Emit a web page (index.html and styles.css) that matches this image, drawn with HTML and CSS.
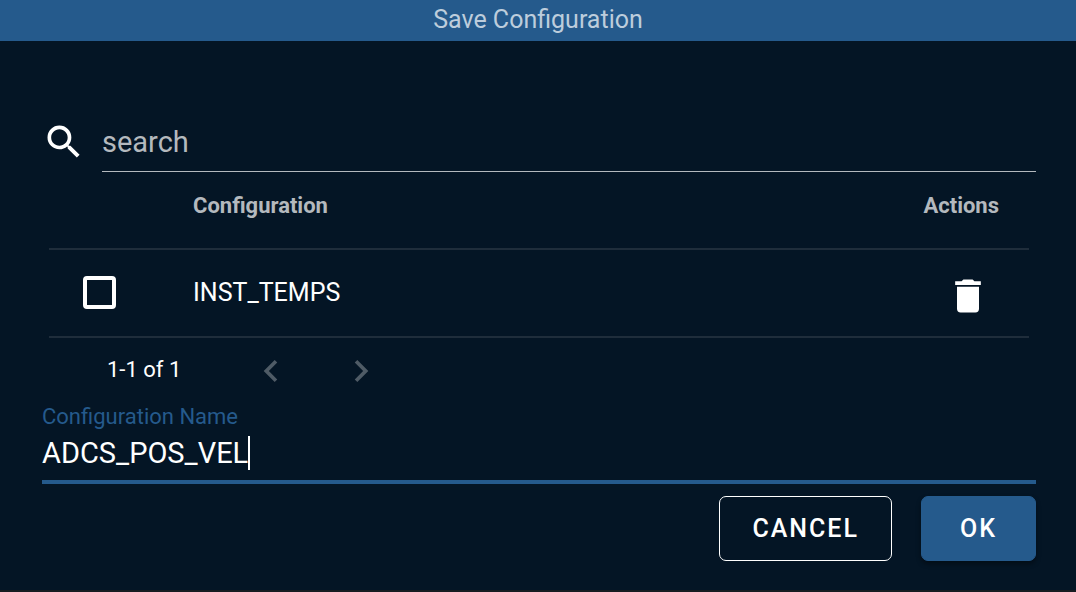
FILE: index.html
```
<!DOCTYPE html>
<html lang="en">
<head>
<meta charset="utf-8">
<meta name="viewport" content="width=device-width, initial-scale=1">
<title>Save Configuration</title>
<link rel="stylesheet" href="styles.css">
</head>
<body>
<main class="dialog">
  <h1 class="dialog-title">Save Configuration</h1>
  <form class="dialog-body">
    <div class="search">
      <svg class="icon" viewBox="0 0 24 24" aria-hidden="true"><path d="M9.5 3A6.5 6.5 0 0 1 16 9.500C16 11.110 15.410 12.590 14.440 13.730L14.710 14H15.500L20.500 19L19 20.500L14 15.500V14.710L13.730 14.440C12.590 15.410 11.110 16 9.500 16A6.500 6.500 0 0 1 3 9.500A6.500 6.500 0 0 1 9.500 3M9.500 5C7 5 5 7 5 9.500C5 12 7 14 9.500 14C12 14 14 12 14 9.500C14 7 12 5 9.500 5Z"/></svg>
      <input class="search-input" type="text" placeholder="search" aria-label="search">
    </div>
    <div class="table-area">
      <table class="configs">
        <thead>
          <tr><th class="select-col"></th><th class="name-col">Configuration</th><th class="action-col">Actions</th></tr>
        </thead>
        <tbody>
          <tr>
            <td class="select-col"><input class="checkbox" type="checkbox" aria-label="Select INST_TEMPS"></td>
            <td class="name-col">INST_TEMPS</td>
            <td class="action-col"><button class="icon-button" type="button" aria-label="Delete"><svg class="icon" viewBox="0 0 24 24" aria-hidden="true"><path d="M19 4H15.500L14.500 3H9.500L8.500 4H5V6H19M6 19A2 2 0 0 0 8 21H16A2 2 0 0 0 18 19V7H6V19Z"/></svg></button></td>
          </tr>
        </tbody>
      </table>
      <div class="pager">
        <span class="range">1-1 of 1</span>
        <button class="icon-button page-button" type="button" aria-label="Previous page" disabled><svg class="icon" viewBox="0 0 24 24" aria-hidden="true"><path d="M15.410 16.580L10.830 12L15.410 7.410L14 6L8 12L14 18L15.410 16.580Z"/></svg></button>
        <button class="icon-button page-button" type="button" aria-label="Next page" disabled><svg class="icon" viewBox="0 0 24 24" aria-hidden="true"><path d="M8.590 16.580L13.170 12L8.590 7.410L10 6L16 12L10 18L8.590 16.580Z"/></svg></button>
      </div>
    </div>
    <div class="field">
      <label class="field-label" for="config-name">Configuration Name</label>
      <div class="field-line">
        <input class="field-input" id="config-name" type="text" value="ADCS_POS_VEL">
        <span class="caret"></span>
      </div>
    </div>
    <div class="actions">
      <button class="button outlined" type="button">CANCEL</button>
      <button class="button primary" type="submit">OK</button>
    </div>
  </form>
</main>
</body>
</html>
```
FILE: styles.css
```
* {
  box-sizing: border-box;
}

body {
  margin: 0;
  background: #171c21;
  color: #fff;
  font-family: Roboto, "Liberation Sans", sans-serif;
}

input,
button {
  margin: 0;
  padding: 0;
  border: 0;
  background: none;
  color: inherit;
  font-family: inherit;
}

.dialog {
  display: flex;
  flex-direction: column;
  min-height: calc(100vh - 2px);
  background: #041525;
}

.dialog-title {
  margin: 0;
  padding-bottom: 1px;
  background: #255a8c;
  color: #bdcddc;
  font-size: 25px;
  font-weight: 400;
  line-height: 40px;
  text-align: center;
}

.dialog-body {
  display: flex;
  flex-direction: column;
  padding: 72px 40px 29px 42px;
}

.icon {
  display: block;
  width: 44px;
  height: 44px;
  fill: currentColor;
}

.search {
  display: flex;
  align-items: center;
  gap: 16px;
}

.search .icon {
  margin-bottom: 2px;
}

.search-input {
  flex: 1;
  min-width: 0;
  height: 59px;
  border-bottom: 1px solid #b4b9be;
  border-radius: 0;
  font-size: 29px;
  outline: none;
}

.search-input::placeholder {
  color: #b4b9be;
  opacity: 1;
}

.table-area {
  padding: 0 7px;
}

.configs {
  width: 100%;
  border-collapse: separate;
  border-spacing: 0;
}

.configs th,
.configs td {
  padding: 0;
  border-bottom: 2px solid #1f2d3b;
  text-align: left;
}

.configs th {
  height: 78px;
  padding-bottom: 10px;
  color: #b4b9be;
  font-size: 22px;
  font-weight: 700;
}

.configs td {
  height: 88px;
  padding-bottom: 2px;
  font-size: 25px;
}

.configs .select-col {
  width: 144px;
  padding-left: 34px;
}

.configs .action-col {
  width: 136px;
  padding-right: 30px;
  text-align: right;
}

.checkbox {
  display: block;
  width: 33px;
  height: 33px;
  border: 4px solid #fff;
  border-radius: 4px;
  appearance: none;
}

.icon-button {
  display: inline-block;
  vertical-align: middle;
}

.configs .icon-button {
  margin: 8px 9px 0 0;
}

.pager {
  display: flex;
  align-items: center;
  gap: 46px;
  height: 66px;
  padding-left: 58px;
}

.range {
  margin-right: 22px;
  padding-bottom: 3px;
  font-size: 22px;
}

.page-button {
  color: #4f5b66;
}

.field {
  display: flex;
  flex-direction: column;
}

.field-label {
  color: #255a8c;
  font-size: 22px;
  line-height: 26px;
}

.field-line {
  display: flex;
  align-items: center;
  height: 54px;
  padding-bottom: 4px;
  border-bottom: 4px solid #255a8c;
}

.field-input {
  min-width: 0;
  font-size: 29px;
  line-height: 34px;
  outline: none;
  field-sizing: content;
}

.caret {
  width: 2px;
  height: 34px;
  background: #fff;
}

.actions {
  display: flex;
  justify-content: flex-end;
  gap: 29px;
  margin-top: 12px;
}

.button {
  height: 65px;
  padding: 0 32px;
  border: 1px solid #fff;
  border-radius: 7px;
  font-size: 25px;
  font-weight: 500;
  letter-spacing: 2px;
}

.primary {
  padding: 0 38px;
  border-color: #255a8c;
  background: #255a8c;
  box-shadow: 0 3px 5px rgba(0, 0, 0, 0.4);
}
```
